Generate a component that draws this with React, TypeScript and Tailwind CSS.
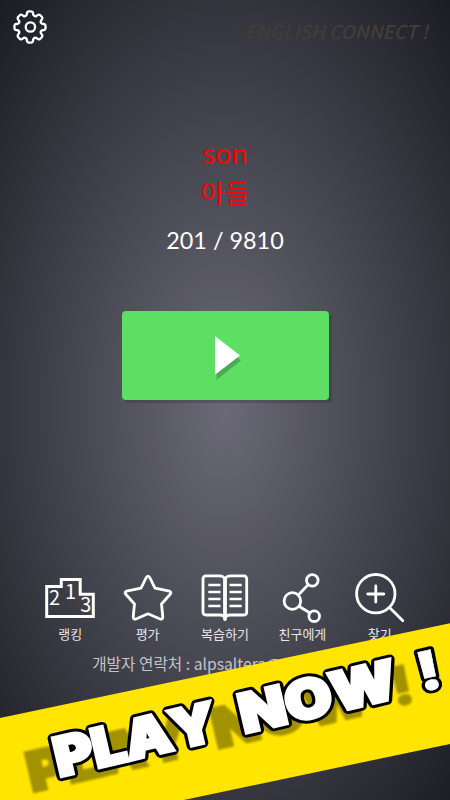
import React from 'react';

const GearIcon: React.FC = () => {
    // eight round teeth, one every 45 degrees
    const at = (deg: number, r: number) => {
        const a = (deg * Math.PI) / 180;
        return `${(17 + r * Math.sin(a)).toFixed(2)} ${(17 - r * Math.cos(a)).toFixed(2)}`;
    };
    let d = '';
    for (let i = 0; i < 8; i++) {
        const a = i * 45;
        d += `${i === 0 ? 'M' : 'L'}${at(a - 15, 12.6)} Q${at(a - 12, 15.6)} ${at(a - 5, 15.6)} L${at(a + 5, 15.6)} Q${at(a + 12, 15.6)} ${at(a + 15, 12.6)} Q${at(a + 22.5, 11)} ${at(a + 30, 12.6)} `;
    }
    return (
        <svg width="34" height="34" viewBox="0 0 34 34" fill="none" stroke="white" strokeWidth="2.3" strokeLinejoin="round">
            <path d={`${d}Z`} />
            <circle cx="17.4" cy="17" r="4.7" />
        </svg>
    );
};

const iconProps = {
    width: 50,
    height: 50,
    viewBox: '0 0 50 50',
    fill: 'none',
    stroke: 'white',
    strokeWidth: 2.8,
    strokeLinecap: 'round' as const,
    strokeLinejoin: 'round' as const
};

const PodiumIcon: React.FC = () => (
    <svg {...iconProps} strokeWidth={3} strokeLinejoin="miter">
        <path d="M1.7 13.6H16.3V6.6H35.2V21.3H48.3V43.4H1.7Z" />
        <g fill="white" stroke="none" fontSize="20" textAnchor="middle" className="font-['Noto_Sans_CJK_KR',sans-serif]">
            <text x="9.6" y="32">2</text>
            <text x="25.6" y="25.6">1</text>
            <text x="40.8" y="39">3</text>
        </g>
    </svg>
);

const StarIcon: React.FC = () => (
    <svg {...iconProps}>
        <path d="M25 3.2Q26 3.2 27 5L32 15.2L46.5 18.2Q49 19.5 47 21.5L38.5 31L39.8 44Q39.5 46.8 37 46L25 40.8L13 46Q10.5 46.8 10.2 44L11.5 31L3 21.5Q1 19.5 3.5 18.2L18 15.2L23 5Q24 3.2 25 3.2Z" />
    </svg>
);

const BookIcon: React.FC = () => (
    <svg {...iconProps}>
        <path d="M25 6Q23.5 2.9 19.5 2.9H6Q3 2.9 3 6V39Q3 42 6 42H20Q24 42 25 45Q26 42 30 42H44Q46.7 42 46.7 39V6Q46.7 2.9 44 2.9H30.5Q26.5 2.9 25 6Z" />
        <path d="M25 6V46" strokeWidth="3.8" />
        <path d="M8.3 12H20.5M8.3 19H20.5M8.3 26H20.5M8.3 33H20.5M29.5 12H41.7M29.5 19H41.7M29.5 26H41.7M29.5 33H41.7" strokeWidth="2.3" strokeLinecap="butt" />
    </svg>
);

const ShareIcon: React.FC = () => (
    <svg {...iconProps}>
        <circle cx="15.4" cy="28" r="8.3" />
        <circle cx="35.3" cy="7.4" r="5.8" />
        <circle cx="37.2" cy="43.2" r="5.3" />
        <path d="M21.3 22L31.2 11.6M22 33.2L33 40" />
    </svg>
);

const FindIcon: React.FC = () => (
    <svg {...iconProps}>
        <circle cx="20.8" cy="20.7" r="19.2" />
        <path d="M12.8 21H28.8M20.8 13V29M35 35L47.8 47.8" />
    </svg>
);

const menu = [
    { label: '랭킹', icon: <PodiumIcon /> },
    { label: '평가', icon: <StarIcon /> },
    { label: '복습하기', icon: <BookIcon /> },
    { label: '친구에게', icon: <ShareIcon /> },
    { label: '찾기', icon: <FindIcon /> }
];

// the black copy is the outline, the white one fattens the letters inside it
const Lettering: React.FC<{ color: string; width: number }> = ({ color, width }) => (
    <g fill={color} stroke={color} strokeWidth={width} strokeLinejoin={color === 'white' ? 'miter' : 'round'}>
        <text x="0" y="0" textLength="165" lengthAdjust="spacingAndGlyphs">PLAY</text>
        <text x="190" y="0" textLength="160" lengthAdjust="spacingAndGlyphs">NOW</text>
        <text x="372" y="0" textLength="24" lengthAdjust="spacingAndGlyphs" strokeWidth={Math.max(width - 3, 0)}>!</text>
    </g>
);

const Banner: React.FC = () => (
    <div className="absolute inset-x-0 bottom-0 h-[180px]">
        <div className="absolute -left-10 top-[52px] h-[118px] w-[530px] -rotate-[11.9deg] bg-[#ffe500]" />
        {[
            // shadow first, then the outlined letters over it
            { key: 'shadow', className: 'drop-shadow-[-27px_15px_1px_rgba(0,0,0,0.36)]', layers: [['white', 3.5]] },
            { key: 'letters', className: '', layers: [['black', 9.5], ['white', 3.5]] }
        ].map(({ key, className, layers }) => (
            <svg
                key={key}
                aria-hidden={key === 'shadow'}
                className={`absolute inset-0 overflow-visible font-['Inter',sans-serif] [font-kerning:none] ${className}`}
                width="450"
                height="180"
                viewBox="0 0 450 180"
                fontSize="54"
                fontWeight="900"
            >
                <g transform="translate(59 157) rotate(-13.2)">
                    {layers.map(([color, width]) => (
                        <Lettering key={color} color={color as string} width={width as number} />
                    ))}
                </g>
            </svg>
        ))}
    </div>
);

const App: React.FC = () => {
    return (
        <div className="relative flex h-[800px] w-[450px] flex-col overflow-hidden bg-[radial-gradient(ellipse_320px_566px_at_50%_51%,#6b6977_0%,#4f4f5a_36%,#33333c_72%,#1c1c24_100%)] font-['Noto_Sans_CJK_KR',sans-serif] text-white">
            <header className="flex h-[60px] items-start justify-between pl-[13px] pr-[22px] pt-2.5">
                <button type="button" aria-label="settings">
                    <GearIcon />
                </button>
                <h1 className="mt-[7px] text-[18.9px] font-medium italic leading-7 text-[#413d38]">ENGLISH CONNECT !</h1>
            </header>

            <section className="flex flex-col items-center pt-[74px]">
                <p className="h-[38px] text-[27px] leading-[38px] text-[#ff0000]">son</p>
                <p className="h-[42px] text-[26.5px] leading-[39px] text-[#ff0000]">아들</p>
                <p className="mt-2 h-10 font-['Lato',sans-serif] text-[23.4px] leading-[37px]">201 / 9810</p>
                <button
                    type="button"
                    aria-label="play"
                    className="mt-[49px] flex h-[89px] w-[207px] items-center justify-center rounded bg-[#5cdf63] shadow-[3px_3px_1px_rgba(40,30,50,0.25)]"
                >
                    <svg className="ml-1.5 mt-1.5" width="28" height="46" viewBox="0 0 28 46">
                        <path d="M2.5 5V44L27 24.5Z" fill="#4bad51" />
                        <path d="M1 0V38.8L26 19.4Z" fill="white" />
                    </svg>
                </button>
            </section>

            <nav className="mx-auto mt-[173px] grid w-[387px] grid-cols-5">
                {menu.map((item) => (
                    <div key={item.label} className="flex flex-col items-center">
                        {item.icon}
                        <span className="whitespace-nowrap text-[13px] leading-[22px] text-gray-200">{item.label}</span>
                    </div>
                ))}
            </nav>

            <p className="mt-[7px] text-center text-[15.7px] leading-6 text-[#c4c3c8]">개발자 연락처 : alpsaltera@gmail.com</p>

            <Banner />
        </div>
    );
};

export default App;
